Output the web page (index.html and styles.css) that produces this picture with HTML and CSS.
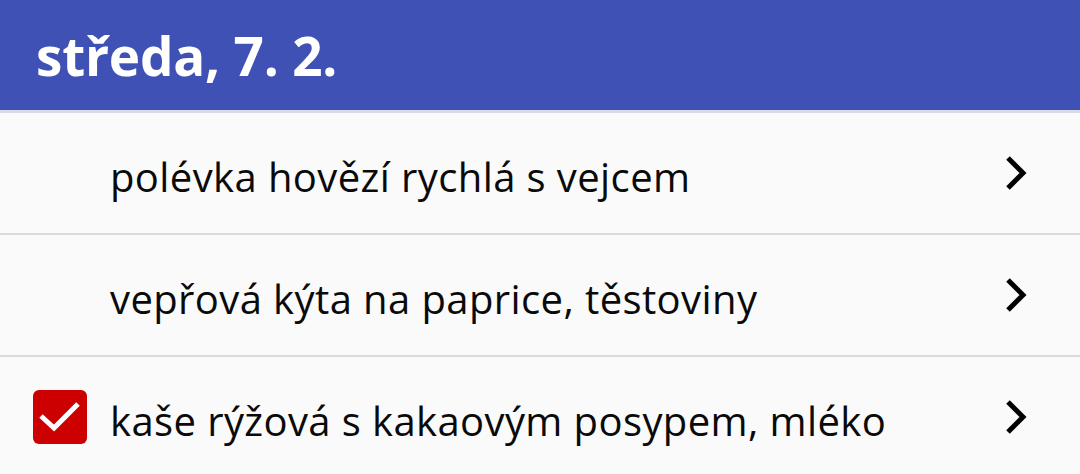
FILE: index.html
```html
<!DOCTYPE html>
<html lang="cs">
<head>
    <meta charset="UTF-8">
    <meta name="viewport" content="width=device-width, initial-scale=1.0">
    <title>Jídelníček</title>
    <link rel="stylesheet" href="styles.css">
</head>
<body>
    <header class="day-header">
        <h1>středa, 7. 2.</h1>
    </header>

    <ul class="meal-list">
        <li class="meal-row">
            <span class="meal-check"></span>
            <span class="meal-name">polévka hovězí rychlá s vejcem</span>
            <svg class="chevron" viewBox="0 0 24 36" width="24" height="36"><path d="M4 3 L19 18 L4 33"/></svg>
        </li>
        <li class="meal-row">
            <span class="meal-check"></span>
            <span class="meal-name">vepřová kýta na paprice, těstoviny</span>
            <svg class="chevron" viewBox="0 0 24 36" width="24" height="36"><path d="M4 3 L19 18 L4 33"/></svg>
        </li>
        <li class="meal-row">
            <span class="meal-check checked">
                <svg viewBox="0 0 54 54" width="54" height="54"><path d="M8 26 L21 38 L45 14"/></svg>
            </span>
            <span class="meal-name">kaše rýžová s kakaovým posypem, mléko</span>
            <svg class="chevron" viewBox="0 0 24 36" width="24" height="36"><path d="M4 3 L19 18 L4 33"/></svg>
        </li>
    </ul>
</body>
</html>
```

FILE: styles.css
```css
:root {
    --indigo: #3f51b5;
    --divider: #dadada;
    --bg: #fafafa;
    --red: #cc0000;
}

body {
    margin: 0;
    background: var(--bg);
    font-family: "Open Sans", "Noto Sans", sans-serif;
    color: #0a0a0a;
}

.day-header {
    background: var(--indigo);
    height: 110px;
    display: flex;
    align-items: center;
    padding-left: 36px;
    border-bottom: 3px solid #d7d9e6;
}

.day-header h1 {
    margin: 0;
    color: #fff;
    font-size: 53px;
    font-weight: 700;
    letter-spacing: -0.2px;
}

.meal-list {
    list-style: none;
    margin: 0;
    padding: 0;
}

.meal-row {
    height: 120px;
    display: flex;
    align-items: center;
    padding: 0 52px 0 33px;
    border-bottom: 2px solid var(--divider);
}

.meal-check {
    width: 54px;
    height: 54px;
    flex: none;
    margin-right: 23px;
}

.meal-check.checked {
    background: var(--red);
    border-radius: 6px;
}

.meal-check svg {
    display: block;
}

.meal-check svg path {
    fill: none;
    stroke: #fff;
    stroke-width: 5;
}

.meal-name {
    flex: 1;
    font-size: 40px;
    letter-spacing: 0.4px;
    padding-top: 7px;
}

.chevron {
    flex: none;
}

.chevron path {
    fill: none;
    stroke: #000;
    stroke-width: 5;
}
```
